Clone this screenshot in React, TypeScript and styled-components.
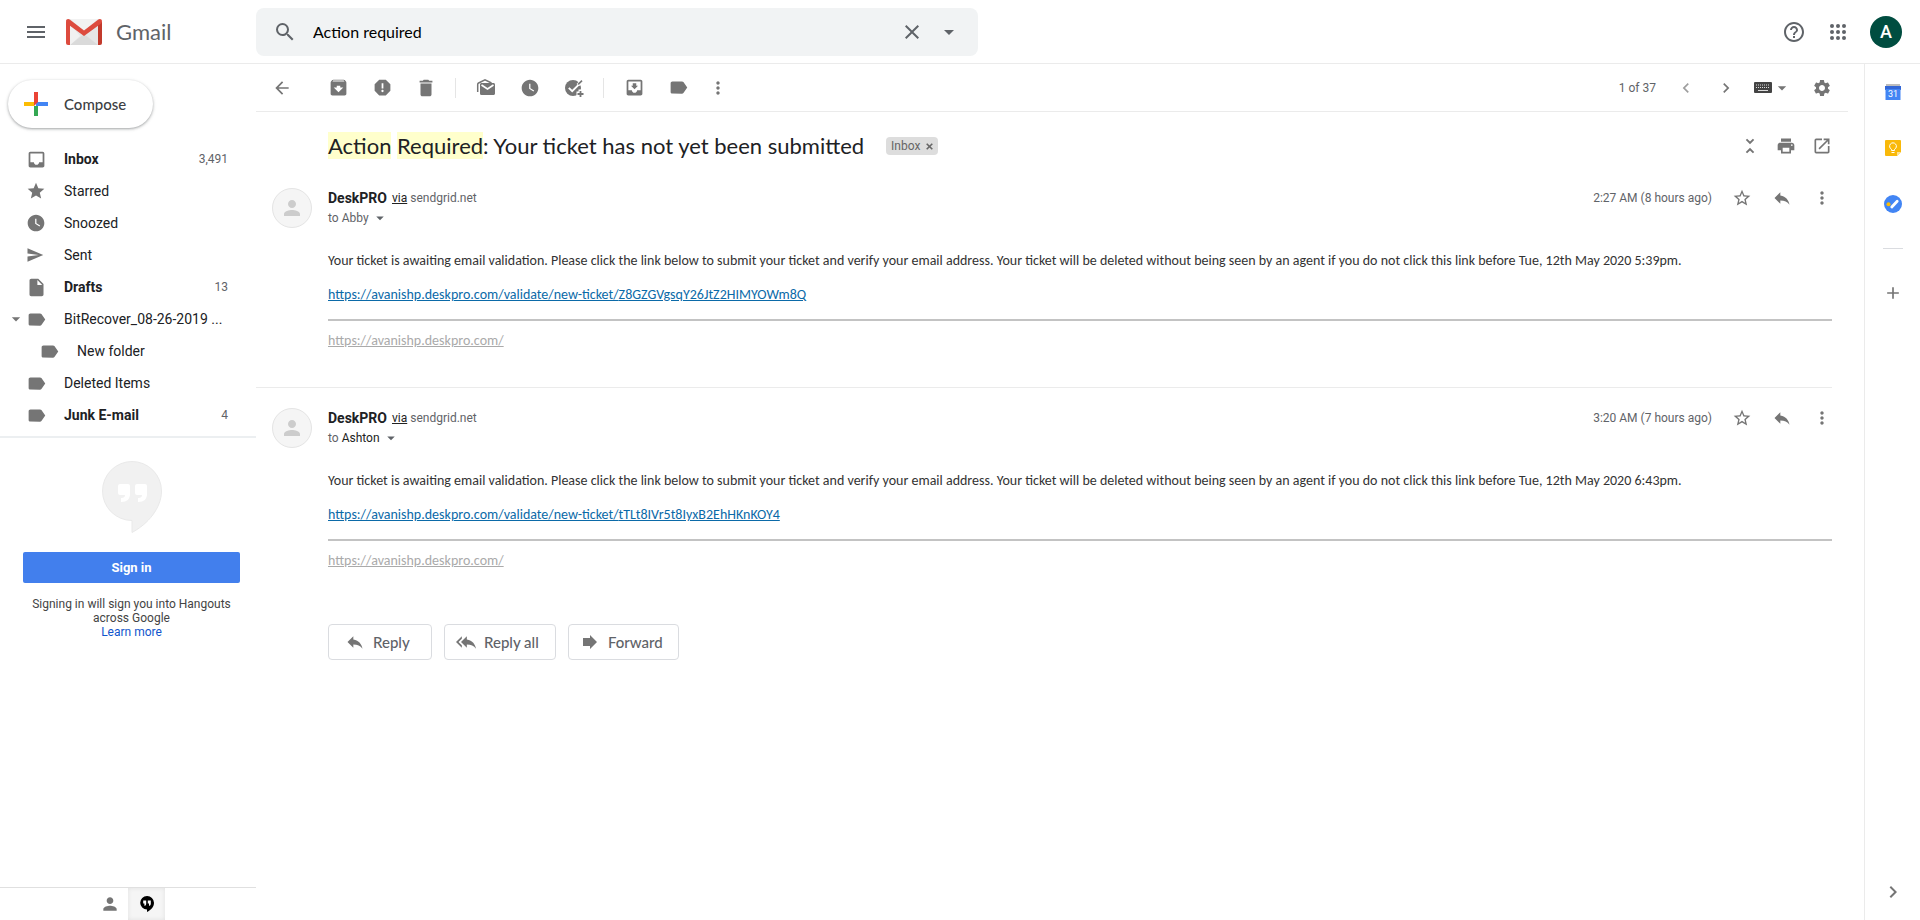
import React from 'react';
import styled, { createGlobalStyle } from 'styled-components';
import {
  MdAdd, MdArchive, MdArrowBack, MdArrowDropDown, MdChevronLeft, MdChevronRight, MdClose,
  MdDelete, MdHelpOutline, MdInbox, MdInsertDriveFile, MdLabel, MdMenu,
  MdMoreVert, MdMoveToInbox, MdOpenInNew, MdPerson, MdPrint, MdReply, MdReplyAll, MdReport,
  MdSearch, MdSend, MdSettings, MdStar, MdStarBorder, MdUnfoldLess, MdWatchLater,
} from 'react-icons/md';

const brand = '"Google Sans", Lato, sans-serif';
const ui = 'Roboto, sans-serif';

const GlobalStyle = createGlobalStyle`
  *, *::before, *::after { box-sizing: border-box; }
  body { margin: 0; background: #fff; color: #202124; font-family: ${ui}; font-size: 14px; }
  button { border: 0; padding: 0; margin: 0; background: none; color: inherit; font: inherit; cursor: pointer; }
  svg { display: block; flex-shrink: 0; }
  h1, h2, p, ul { margin: 0; padding: 0; }
`;

const Page = styled.div`
  display: flex;
  flex-direction: column;
  min-height: 100vh;
`;

const Header = styled.header`
  display: flex;
  align-items: center;
  height: 64px;
  border-bottom: 1px solid #ebebeb;
`;

const BrandArea = styled.div`
  display: flex;
  align-items: center;
  flex: 0 0 256px;
  padding-left: 24px;
  color: #5f6368;
`;

const BrandLink = styled.a`
  display: flex;
  align-items: center;
  gap: 14px;
  margin-left: 18px;
  color: #5f6368;
  font: 22px/32px ${brand};
  text-decoration: none;
`;

const SearchForm = styled.form`
  display: flex;
  align-items: center;
  flex: 0 1 722px;
  height: 48px;
  padding: 0 17px;
  border-radius: 8px;
  background: #f1f3f4;
  color: #5f6368;
`;

const SearchInput = styled.input`
  flex: 1;
  min-width: 0;
  margin-left: 16px;
  padding: 0;
  border: 0;
  outline: 0;
  background: none;
  color: #000;
  font: 16px/24px ${brand};
`;

const SearchButton = styled.button<{ $gap?: number }>`
  margin-left: ${(p) => p.$gap ?? 0}px;
`;

const HeaderActions = styled.div`
  display: flex;
  align-items: center;
  gap: 20px;
  margin-left: auto;
  padding-right: 18px;
  color: #5f6368;
`;

const Account = styled.button`
  width: 32px;
  height: 32px;
  border-radius: 50%;
  background: #004d40;
  color: #fff;
  font: 500 18px/32px ${ui};
`;

const Body = styled.div`
  display: flex;
  flex: 1;
`;

const Sidebar = styled.aside`
  display: flex;
  flex-direction: column;
  flex: 0 0 256px;
`;

const Compose = styled.button`
  display: flex;
  align-items: center;
  align-self: flex-start;
  gap: 16px;
  height: 48px;
  margin: 16px 0 15px 8px;
  padding: 0 27px 0 16px;
  border-radius: 24px;
  background: #fff;
  box-shadow: 0 1px 2px rgba(60, 64, 67, 0.3), 0 1px 3px 1px rgba(60, 64, 67, 0.15);
  color: #3c4043;
  font: 500 15px/20px ${brand};
`;

const NavList = styled.ul`
  list-style: none;
  padding-bottom: 5px;
  border-bottom: 2px solid #eceff1;
`;

const NavItem = styled.a<{ $bold?: boolean; $nested?: boolean }>`
  display: grid;
  grid-template-columns: 20px 21px 1fr auto;
  align-items: center;
  height: 32px;
  padding: 0 28px 0 ${(p) => (p.$nested ? 19 : 6)}px;
  color: #202124;
  font-size: 14px;
  font-weight: ${(p) => (p.$bold ? 700 : 400)};
  text-decoration: none;
  svg { color: #757575; }
`;

const NavText = styled.span`
  padding-left: 17px;
  white-space: nowrap;
`;

const NavCount = styled.span`
  color: #5f6368;
  font-size: 12px;
  font-weight: 400;
`;

const Hangouts = styled.section`
  display: flex;
  flex-direction: column;
  align-items: center;
  padding: 23px 16px 0 23px;
  font-size: 12px;
  line-height: 14px;
  text-align: center;
  color: #444;
`;

const SignIn = styled.button`
  width: 100%;
  height: 31px;
  margin: 19px 0 14px;
  border-radius: 2px;
  background: #427fed;
  color: #fff;
  font: 700 13px/31px ${ui};
`;

const LearnMore = styled.a`
  color: #15c;
  text-decoration: none;
`;

const SideTabs = styled.div`
  display: flex;
  justify-content: center;
  height: 33px;
  margin-top: auto;
  border-top: 1px solid #e0e0e0;
`;

const SideTab = styled.button<{ $active?: boolean }>`
  display: grid;
  place-items: center;
  width: 37px;
  background: ${(p) => (p.$active ? '#f5f5f5' : 'none')};
  box-shadow: ${(p) => (p.$active ? 'inset 0 0 4px #e0e0e0' : 'none')};
  color: ${(p) => (p.$active ? '#000' : '#757575')};
`;

const Main = styled.main`
  flex: 1;
  min-width: 0;
  padding-right: 16px;
`;

const Toolbar = styled.div`
  display: flex;
  align-items: center;
  height: 48px;
  padding: 0 4px;
  border-bottom: 1px solid #ebebeb;
  color: #757575;
`;

const ToolButton = styled.button<{ $width?: number }>`
  display: flex;
  align-items: center;
  justify-content: center;
  width: ${(p) => p.$width ?? 44}px;
  height: 40px;
  &:disabled { color: #9e9e9e; }
`;

const Divider = styled.span`
  width: 1px;
  height: 20px;
  margin: 0 8px 0 7px;
  background: #e5e5e5;
`;

const Spacer = styled.span<{ $width?: number }>`
  flex: ${(p) => (p.$width ? `0 0 ${p.$width}px` : '1')};
`;

const Pager = styled.span`
  margin-right: 10px;
  color: #5f6368;
  font-size: 12px;
`;

const Subject = styled.div`
  display: flex;
  align-items: center;
  height: 56px;
  padding: 12px 16px 0 72px;
`;

const Title = styled.h1`
  font: 400 22px/28px ${brand};
  color: #202124;
`;

const Mark = styled.mark`
  background: #ffc;
  color: inherit;
`;

const Chip = styled.span`
  display: flex;
  align-items: center;
  gap: 6px;
  height: 18px;
  margin-left: 22px;
  padding: 0 5px;
  border-radius: 4px;
  background: #ddd;
  color: #666;
  font-size: 12px;
`;

const Actions = styled.div<{ $gap: number }>`
  display: flex;
  align-items: center;
  gap: ${(p) => p.$gap}px;
  height: 20px;
  margin-left: auto;
  color: #757575;
`;

const SmallButton = styled.button`
  display: flex;
  align-items: center;
  justify-content: center;
  width: 20px;
  height: 20px;
`;

const Message = styled.article`
  display: grid;
  grid-template-columns: 40px 1fr;
  column-gap: 16px;
  margin-right: 16px;
  padding: 20px 0 37px 16px;
`;

const MessageRule = styled.hr`
  height: 1px;
  margin: 0 16px 0 0;
  border: 0;
  background: #ebebeb;
`;

const Avatar = styled.div`
  display: grid;
  place-items: center;
  width: 40px;
  height: 40px;
  border: 1px solid #e4e4e4;
  border-radius: 50%;
  background: #f5f5f5;
  color: #ccc;
`;

const SenderRow = styled.div`
  display: flex;
  align-items: flex-start;
  line-height: 20px;
`;

const Sender = styled.h2`
  font: 700 14px/20px ${ui};
`;

const Via = styled.span`
  margin-left: 5px;
  color: #5f6368;
  font-size: 12px;
  a { color: #222; }
`;

const Time = styled.time`
  color: #5f6368;
  font-size: 12px;
`;

const Recipient = styled.button<{ $dark?: boolean }>`
  display: flex;
  align-items: center;
  gap: 2px;
  height: 20px;
  color: #5f6368;
  font-size: 12px;
  span { color: ${(p) => (p.$dark ? '#222' : 'inherit')}; }
`;

const Content = styled.div`
  margin-top: 24px;
  font: 14px/18px Calibri, Carlito, Lato, sans-serif;
  color: #333;
`;

const ValidateLink = styled.a`
  display: inline-block;
  margin: 16px 0 15px;
  color: #0b6aa8;
`;

const Footer = styled.footer`
  padding-top: 11px;
  border-top: 2px solid #c3c3c3;
  a { color: #aaa; }
`;

const Replies = styled.div`
  display: flex;
  gap: 12px;
  padding: 17px 0 24px 72px;
`;

const ReplyButton = styled.button<{ $gap?: number; $pad?: number; $width: number }>`
  display: flex;
  align-items: center;
  gap: ${(p) => p.$gap ?? 8}px;
  min-width: ${(p) => p.$width}px;
  height: 36px;
  padding: 0 ${(p) => p.$pad ?? 11}px;
  border: 1px solid #dadce0;
  border-radius: 4px;
  color: #5f6368;
  font: 500 15px/20px ${brand};
  svg { color: #757575; }
`;

const SidePanel = styled.aside`
  display: flex;
  flex-direction: column;
  align-items: center;
  flex: 0 0 56px;
  padding: 16px 0;
  border-left: 1px solid #ebebeb;
  color: #757575;
`;

const PanelButton = styled.button`
  display: grid;
  place-items: center;
  width: 24px;
  height: 24px;
  margin-bottom: 32px;
`;

const PanelRule = styled.hr`
  width: 20px;
  height: 1px;
  margin: 0 0 32px;
  border: 0;
  background: #dadce0;
`;

const PanelToggle = styled.button`
  margin-top: auto;
`;

const GmailLogo = () => (
  <svg width="36" height="26" viewBox="0 0 36 26" aria-hidden="true">
    <path d="M2 0h32v26H2z" fill="#e6e6e6" />
    <path d="M4 26 18 15l14 11z" fill="#dadada" />
    <path d="M4 5v21l10-9z" fill="#f1f1f1" />
    <path d="M4 0h28L18 12z" fill="#f2f2f2" />
    <path d="M0 2.5 4 5.500V26H2a2 2 0 0 1-2-2z" fill="#dd4b3e" />
    <path d="M36 2.500 32 5.500V26h2a2 2 0 0 0 2-2z" fill="#c23a2c" />
    <path d="M0 2.300C0 0 2.400-.5 4 .8l14 10.700L32 .8c1.600-1.300 4-.8 4 1.500 0 1-.4 1.800-1.200 2.400L18 17 1.200 4.700C.4 4.100 0 3.300 0 2.300z" fill="#dd4b3e" />
  </svg>
);

const AppsIcon = () => (
  <svg width="24" height="24" viewBox="0 0 24 24" fill="currentColor" aria-hidden="true">
    {[6, 12, 18].map((y) => [6, 12, 18].map((x) => <circle key={`${x}${y}`} cx={x} cy={y} r="2" />))}
  </svg>
);

const ComposeIcon = () => (
  <svg width="24" height="24" viewBox="0 0 24 24" aria-hidden="true">
    <path d="M10 0h4v12h-4z" fill="#ea4335" />
    <path d="M12 10h12v4H12z" fill="#4285f4" />
    <path d="M0 10h10v4H0z" fill="#fbbc04" />
    <path d="M10 14h4v10h-4z" fill="#34a853" />
    <path d="M10 10h4l-4 4z" fill="#ea4335" />
  </svg>
);

const ChipCloseIcon = () => (
  <svg width="7" height="7" viewBox="0 0 7 7" aria-hidden="true">
    <path d="m.7.7 5.600 5.600M6.300.7.7 6.300" stroke="currentColor" strokeWidth="1.600" />
  </svg>
);

const MarkReadIcon = () => (
  <svg width="20" height="20" viewBox="0 0 20 20" aria-hidden="true">
    <path d="M1.700 14V6.500c0-.7.300-1.200.9-1.500L9 1.900 15.500 5" fill="none" stroke="currentColor" strokeWidth="1.500" />
    <path d="M5 5h12.500c.8 0 1.500.7 1.500 1.500v9c0 .8-.7 1.500-1.500 1.500h-12A1.500 1.500 0 0 1 4 15.500V6z" fill="currentColor" />
    <path d="m5.500 7 6 4 6-4" fill="none" stroke="#fff" strokeWidth="1.600" />
  </svg>
);

const AddTaskIcon = () => (
  <svg width="20" height="20" viewBox="0 0 20 20" aria-hidden="true">
    <circle cx="9" cy="10" r="8" fill="currentColor" />
    <path d="m4.800 9.800 3.400 3.400 8.300-8.300" fill="none" stroke="#fff" strokeWidth="1.900" />
    <path d="m12.500 6 5-5L20 4l-4 4z" fill="#fff" />
    <path d="m14.200 6.400 3.800-3.800" stroke="currentColor" strokeWidth="1.600" />
    <path d="M12.500 13.500h2v-2H20V20h-7.500z" fill="#fff" />
    <path d="M16.500 13v6M13.500 16h6" stroke="currentColor" strokeWidth="1.800" />
  </svg>
);

const KeyboardIcon = () => (
  <svg width="18" height="12" viewBox="0 0 18 12" aria-hidden="true">
    <rect width="18" height="11" rx="1" fill="#444" />
    <path d="M2 3h14M2 5.500h14" stroke="#ddd" strokeDasharray="1 1" />
    <path d="M4 8.500h10" stroke="#ddd" />
  </svg>
);

const ForwardIcon = () => (
  <svg width="20" height="20" viewBox="0 0 20 20" fill="currentColor" aria-hidden="true">
    <path d="M3 6h7V3l7 7-7 7v-3H3z" />
  </svg>
);

const HangoutsMark = () => (
  <svg width="60" height="72" viewBox="0 0 60 72" aria-hidden="true">
    <path d="M30 .5a29.500 29.500 0 0 0 0 59v12C46 63 59.500 47 59.500 30A29.500 29.500 0 0 0 30 .5z" fill="#f1f1f1" stroke="#e9e9e9" />
    <path d="M18 23h8a2 2 0 0 1 2 2v8c0 5-3 8-9 8v-4c3 0 4-1 4-3h-5a2 2 0 0 1-2-2v-7a2 2 0 0 1 2-2zM35 23h8a2 2 0 0 1 2 2v8c0 5-3 8-9 8v-4c3 0 4-1 4-3h-5a2 2 0 0 1-2-2v-7a2 2 0 0 1 2-2z" fill="#fff" />
  </svg>
);

const HangoutsTabIcon = () => (
  <svg width="14" height="16" viewBox="0 0 14 16" aria-hidden="true">
    <path d="M7 0a6.800 6.800 0 0 0 0 13.600V16c4-1.800 7-5 7-9.200A6.900 6.900 0 0 0 7 0z" />
    <path d="M3.200 4.500h3v3.200c0 1.300-.7 2-1.800 2.100V7.500H3.200zM7.800 4.500h3v3.200c0 1.300-.7 2-1.800 2.100V7.500H7.800z" fill="#fff" />
  </svg>
);

const CalendarIcon = () => (
  <svg width="16" height="16" viewBox="0 0 16 16" aria-hidden="true">
    <path d="M1 0h14v3H1z" fill="#bdbdbd" />
    <path d="M0 2h16v4H0z" fill="#3367d6" />
    <path d="M.5 5h15v11H.500z" fill="#4285f4" />
    <text x="8" y="13" textAnchor="middle" fontFamily="Roboto, sans-serif" fontSize="9" fill="#fff">31</text>
  </svg>
);

const KeepIcon = () => (
  <svg width="16" height="16" viewBox="0 0 16 16" aria-hidden="true">
    <path d="M1 0h14a1 1 0 0 1 1 1v11l-4 4H1a1 1 0 0 1-1-1V1a1 1 0 0 1 1-1z" fill="#f9b90a" />
    <path d="M16 12h-4v4z" fill="#fde293" />
    <path d="M6.500 10.500V9.300a3.400 3.400 0 1 1 3 0v1.200zM6.500 12.500h3" fill="none" stroke="#fff" />
  </svg>
);

const TasksIcon = () => (
  <svg width="18" height="18" viewBox="0 0 18 18" aria-hidden="true">
    <circle cx="9" cy="9" r="9" fill="#4285f4" />
    <circle cx="4.500" cy="9.300" r="2" fill="#fbbc04" />
    <path d="m7.800 12 5.400-5.700" stroke="#fff" strokeWidth="2.800" strokeLinecap="round" />
  </svg>
);

type Folder = {
  name: string;
  icon: React.ReactNode;
  count?: string;
  bold?: boolean;
  nested?: boolean;
  open?: boolean;
};

const folders: Folder[] = [
  { name: 'Inbox', icon: <MdInbox size={21} />, count: '3,491', bold: true },
  { name: 'Starred', icon: <MdStar size={20} /> },
  { name: 'Snoozed', icon: <MdWatchLater size={20} /> },
  { name: 'Sent', icon: <MdSend size={18} /> },
  { name: 'Drafts', icon: <MdInsertDriveFile size={21} />, count: '13', bold: true },
  { name: 'BitRecover_08-26-2019 ...', icon: <MdLabel size={21} />, open: true },
  { name: 'New folder', icon: <MdLabel size={21} />, nested: true },
  { name: 'Deleted Items', icon: <MdLabel size={21} /> },
  { name: 'Junk E-mail', icon: <MdLabel size={21} />, count: '4', bold: true },
];

const messages = [
  { to: 'Abby', time: '2:27 AM (8 hours ago)', expires: '5:39pm', code: 'Z8GZGVgsqY26JtZ2HIMYOWm8Q', dark: false },
  { to: 'Ashton', time: '3:20 AM (7 hours ago)', expires: '6:43pm', code: 'tTLt8IVr5t8IyxB2EhHKnKOY4', dark: true },
];

export default function App() {
  return (
    <>
      <GlobalStyle />
      <Page>
        <Header>
          <BrandArea>
            <button aria-label="Main menu"><MdMenu size={24} /></button>
            <BrandLink href="#"><GmailLogo />Gmail</BrandLink>
          </BrandArea>
          <SearchForm role="search" onSubmit={(e) => e.preventDefault()}>
            <SearchButton aria-label="Search"><MdSearch size={24} /></SearchButton>
            <SearchInput aria-label="Search mail" defaultValue="Action required" />
            <SearchButton type="button" aria-label="Clear search"><MdClose size={24} /></SearchButton>
            <SearchButton type="button" $gap={13} aria-label="Search options"><MdArrowDropDown size={24} /></SearchButton>
          </SearchForm>
          <HeaderActions>
            <button aria-label="Support"><MdHelpOutline size={24} /></button>
            <button aria-label="Google apps"><AppsIcon /></button>
            <Account aria-label="Account">A</Account>
          </HeaderActions>
        </Header>
        <Body>
          <Sidebar>
            <Compose><ComposeIcon />Compose</Compose>
            <nav aria-label="Folders">
              <NavList>
                {folders.map((f) => (
                  <li key={f.name}>
                    <NavItem href="#" $bold={f.bold} $nested={f.nested}>
                      <span>{f.open && <MdArrowDropDown size={20} />}</span>
                      {f.icon}
                      <NavText>{f.name}</NavText>
                      {f.count && <NavCount>{f.count}</NavCount>}
                    </NavItem>
                  </li>
                ))}
              </NavList>
            </nav>
            <Hangouts>
              <HangoutsMark />
              <SignIn>Sign in</SignIn>
              <p>Signing in will sign you into Hangouts across Google</p>
              <LearnMore href="#">Learn more</LearnMore>
            </Hangouts>
            <SideTabs>
              <SideTab aria-label="Contacts"><MdPerson size={20} /></SideTab>
              <SideTab $active aria-label="Hangouts conversations"><HangoutsTabIcon /></SideTab>
            </SideTabs>
          </Sidebar>
          <Main>
            <Toolbar>
              <ToolButton aria-label="Back"><MdArrowBack size={20} /></ToolButton>
              <Spacer $width={12} />
              <ToolButton aria-label="Archive"><MdArchive size={21} /></ToolButton>
              <ToolButton aria-label="Report spam"><MdReport size={21} /></ToolButton>
              <ToolButton aria-label="Delete"><MdDelete size={22} /></ToolButton>
              <Divider />
              <ToolButton aria-label="Mark as unread"><MarkReadIcon /></ToolButton>
              <ToolButton aria-label="Snooze"><MdWatchLater size={20} /></ToolButton>
              <ToolButton aria-label="Add to tasks"><AddTaskIcon /></ToolButton>
              <Divider />
              <ToolButton aria-label="Move to"><MdMoveToInbox size={21} /></ToolButton>
              <ToolButton aria-label="Labels"><MdLabel size={21} /></ToolButton>
              <ToolButton $width={36} aria-label="More"><MdMoreVert size={20} /></ToolButton>
              <Spacer />
              <Pager>1 of 37</Pager>
              <ToolButton $width={40} disabled aria-label="Newer"><MdChevronLeft size={20} /></ToolButton>
              <ToolButton $width={40} aria-label="Older"><MdChevronRight size={20} /></ToolButton>
              <ToolButton $width={54} aria-label="Input tools"><KeyboardIcon /><MdArrowDropDown size={20} /></ToolButton>
              <ToolButton aria-label="Settings"><MdSettings size={20} /></ToolButton>
            </Toolbar>
            <Subject>
              <Title><Mark>Action</Mark> <Mark>Required</Mark>: Your ticket has not yet been submitted</Title>
              <Chip>Inbox<button aria-label="Remove label Inbox"><ChipCloseIcon /></button></Chip>
              <Actions $gap={16}>
                <SmallButton aria-label="Collapse all"><MdUnfoldLess size={22} /></SmallButton>
                <SmallButton aria-label="Print all"><MdPrint size={20} /></SmallButton>
                <SmallButton aria-label="In new window"><MdOpenInNew size={20} /></SmallButton>
              </Actions>
            </Subject>
            {messages.map((m, i) => (
              <React.Fragment key={m.code}>
                {i > 0 && <MessageRule />}
                <Message>
                  <Avatar><MdPerson size={24} /></Avatar>
                  <div>
                    <SenderRow>
                      <Sender>DeskPRO</Sender>
                      <Via><a href="#">via</a> sendgrid.net</Via>
                      <Actions $gap={20}>
                        <Time>{m.time}</Time>
                        <SmallButton aria-label="Star"><MdStarBorder size={20} /></SmallButton>
                        <SmallButton aria-label="Reply"><MdReply size={20} /></SmallButton>
                        <SmallButton aria-label="More"><MdMoreVert size={20} /></SmallButton>
                      </Actions>
                    </SenderRow>
                    <Recipient $dark={m.dark}>
                      <div>to <span>{m.to}</span></div>
                      <MdArrowDropDown size={18} />
                    </Recipient>
                    <Content>
                      <p>
                        Your ticket is awaiting email validation. Please click the link below to submit your ticket and verify your email address. Your ticket will be deleted without being seen by an agent if you do not click this link before Tue, 12th May 2020 {m.expires}.
                      </p>
                      <ValidateLink href="#">https://avanishp.deskpro.com/validate/new-ticket/{m.code}</ValidateLink>
                      <Footer><a href="#">https://avanishp.deskpro.com/</a></Footer>
                    </Content>
                  </div>
                </Message>
              </React.Fragment>
            ))}
            <Replies>
              <ReplyButton $width={104} $pad={16}><MdReply size={20} />Reply</ReplyButton>
              <ReplyButton $width={112}><MdReplyAll size={20} />Reply all</ReplyButton>
              <ReplyButton $width={111}><ForwardIcon />Forward</ReplyButton>
            </Replies>
          </Main>
          <SidePanel aria-label="Side panel">
            <PanelButton aria-label="Calendar"><CalendarIcon /></PanelButton>
            <PanelButton aria-label="Keep"><KeepIcon /></PanelButton>
            <PanelButton aria-label="Tasks"><TasksIcon /></PanelButton>
            <PanelRule />
            <PanelButton aria-label="Get add-ons"><MdAdd size={20} /></PanelButton>
            <PanelToggle aria-label="Hide side panel"><MdChevronRight size={24} /></PanelToggle>
          </SidePanel>
        </Body>
      </Page>
    </>
  );
}
